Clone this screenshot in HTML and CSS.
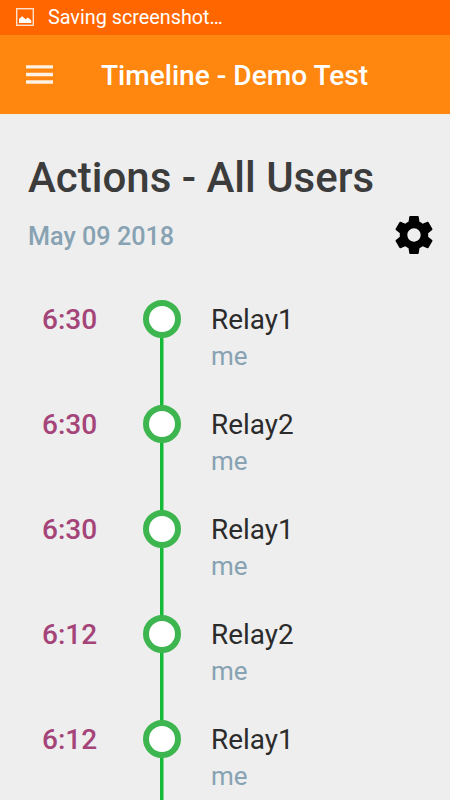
FILE: index.html
```html
<!DOCTYPE html>
<html lang="en">
<head>
    <meta charset="UTF-8">
    <meta name="viewport" content="width=device-width, initial-scale=1.0">
    <title>Timeline - Demo Test</title>
    <link rel="stylesheet" href="styles.css">
</head>
<body>
    <div class="status-bar">
        <svg class="picture-icon" viewBox="0 0 18 18">
            <rect x="0.7" y="0.7" width="16.6" height="16.6" fill="none" stroke="#ffe0cc" stroke-width="1.4"/>
            <path d="M3 15V11L6.2 8.3L9.5 11.3L12 9.5L15.3 12.5V15Z" fill="#fff"/>
        </svg>
        <span>Saving screenshot…</span>
    </div>

    <header class="toolbar">
        <svg class="menu-icon" viewBox="0 0 27 19">
            <path d="M0 1.9H27M0 9.5H27M0 17H27" stroke="#fff1e3" stroke-width="3.4"/>
        </svg>
        <h1>Timeline - Demo Test</h1>
    </header>

    <main>
        <h2>Actions - All Users</h2>
        <div class="date-row">
            <span class="date">May 09 2018</span>
            <svg class="settings-icon" viewBox="2 2 20 20">
                <path d="M19.43 12.98c.04-.32.07-.64.07-.98s-.03-.66-.07-.98l2.11-1.65c.19-.15.24-.42.12-.64l-2-3.46c-.12-.22-.39-.3-.61-.22l-2.49 1c-.52-.4-1.08-.73-1.69-.98l-.38-2.65C14.46 2.18 14.25 2 14 2h-4c-.25 0-.46.18-.49.42l-.38 2.65c-.61.25-1.17.59-1.69.98l-2.49-1c-.23-.09-.49 0-.61.22l-2 3.46c-.13.22-.07.49.12.64l2.11 1.65c-.04.32-.07.65-.07.98s.03.66.07.98l-2.11 1.65c-.19.15-.24.42-.12.64l2 3.46c.12.22.39.3.61.22l2.49-1c.52.4 1.08.73 1.69.98l.38 2.65c.03.24.24.42.49.42h4c.25 0 .46-.18.49-.42l.38-2.65c.61-.25 1.17-.59 1.69-.98l2.49 1c.23.09.49 0 .61-.22l2-3.46c.12-.22.07-.49-.12-.64l-2.11-1.65zM12 15.5c-1.93 0-3.5-1.57-3.5-3.5s1.57-3.5 3.5-3.5 3.5 1.57 3.5 3.5-1.57 3.5-3.5 3.5z"/>
            </svg>
        </div>

        <ul class="timeline">
            <li>
                <span class="time">6:30</span>
                <div class="track"><span class="dot"></span></div>
                <div class="action">
                    <p class="name">Relay1</p>
                    <p class="user">me</p>
                </div>
            </li>
            <li>
                <span class="time">6:30</span>
                <div class="track"><span class="dot"></span></div>
                <div class="action">
                    <p class="name">Relay2</p>
                    <p class="user">me</p>
                </div>
            </li>
            <li>
                <span class="time">6:30</span>
                <div class="track"><span class="dot"></span></div>
                <div class="action">
                    <p class="name">Relay1</p>
                    <p class="user">me</p>
                </div>
            </li>
            <li>
                <span class="time">6:12</span>
                <div class="track"><span class="dot"></span></div>
                <div class="action">
                    <p class="name">Relay2</p>
                    <p class="user">me</p>
                </div>
            </li>
            <li>
                <span class="time">6:12</span>
                <div class="track"><span class="dot"></span></div>
                <div class="action">
                    <p class="name">Relay1</p>
                    <p class="user">me</p>
                </div>
            </li>
        </ul>
    </main>
</body>
</html>
```

FILE: styles.css
```css
* {
    box-sizing: border-box;
}
body {
    font-family: Roboto, sans-serif;
    margin: 0;
    height: 800px;
    overflow: hidden;
    background-color: #eee;
}
h1, h2, p, ul {
    margin: 0;
    padding: 0;
}
.status-bar {
    display: flex;
    align-items: center;
    height: 35px;
    padding: 0 0 1px 16px;
    gap: 14px;
    background-color: #ff6600;
    color: #fff;
    font-size: 19.8px;
}
.picture-icon {
    width: 18px;
    height: 18px;
}
.toolbar {
    display: flex;
    align-items: center;
    height: 79px;
    padding-left: 26px;
    gap: 48px;
    background-color: #ff870f;
    color: #fff;
}
.toolbar h1 {
    font-size: 28.1px;
    font-weight: 500;
    padding-top: 2px;
}
.menu-icon {
    width: 27px;
    height: 19px;
}
h2 {
    padding: 38px 0 0 28px;
    font-size: 42px;
    line-height: 52px;
    font-weight: 500;
    color: #3c3c3c;
}
.date-row {
    display: flex;
    justify-content: space-between;
    align-items: center;
    height: 62px;
    padding: 0 17px 0 28px;
}
.date {
    padding-top: 2px;
    font-size: 25.2px;
    font-weight: 500;
    color: #87a2b2;
}
.settings-icon {
    width: 38px;
    height: 38px;
}
.timeline {
    list-style: none;
    padding-top: 34px;
}
.timeline li {
    display: flex;
    height: 105px;
}
.time {
    width: 142px;
    padding-left: 42px;
    font-size: 28px;
    line-height: 40px;
    font-weight: 500;
    color: #a54478;
}
.track {
    width: 39px;
    background: linear-gradient(#15bb38, #15bb38) 17.5px 0 / 3.5px 100% no-repeat;
}
.dot {
    display: block;
    width: 38px;
    height: 38px;
    margin-left: 1px;
    border: 6px solid #3eb64f;
    border-radius: 50%;
    background-color: #fff;
}
/* nothing above the first dot */
.timeline li:first-child .track {
    background-size: 3.5px 90px;
    background-position: 17.5px 15px;
}
.action {
    padding-left: 30px;
}
.name {
    font-size: 27.9px;
    line-height: 40px;
    color: #2b2b2b;
}
.user {
    font-size: 26px;
    line-height: 32px;
    color: #87a2b2;
}
```
